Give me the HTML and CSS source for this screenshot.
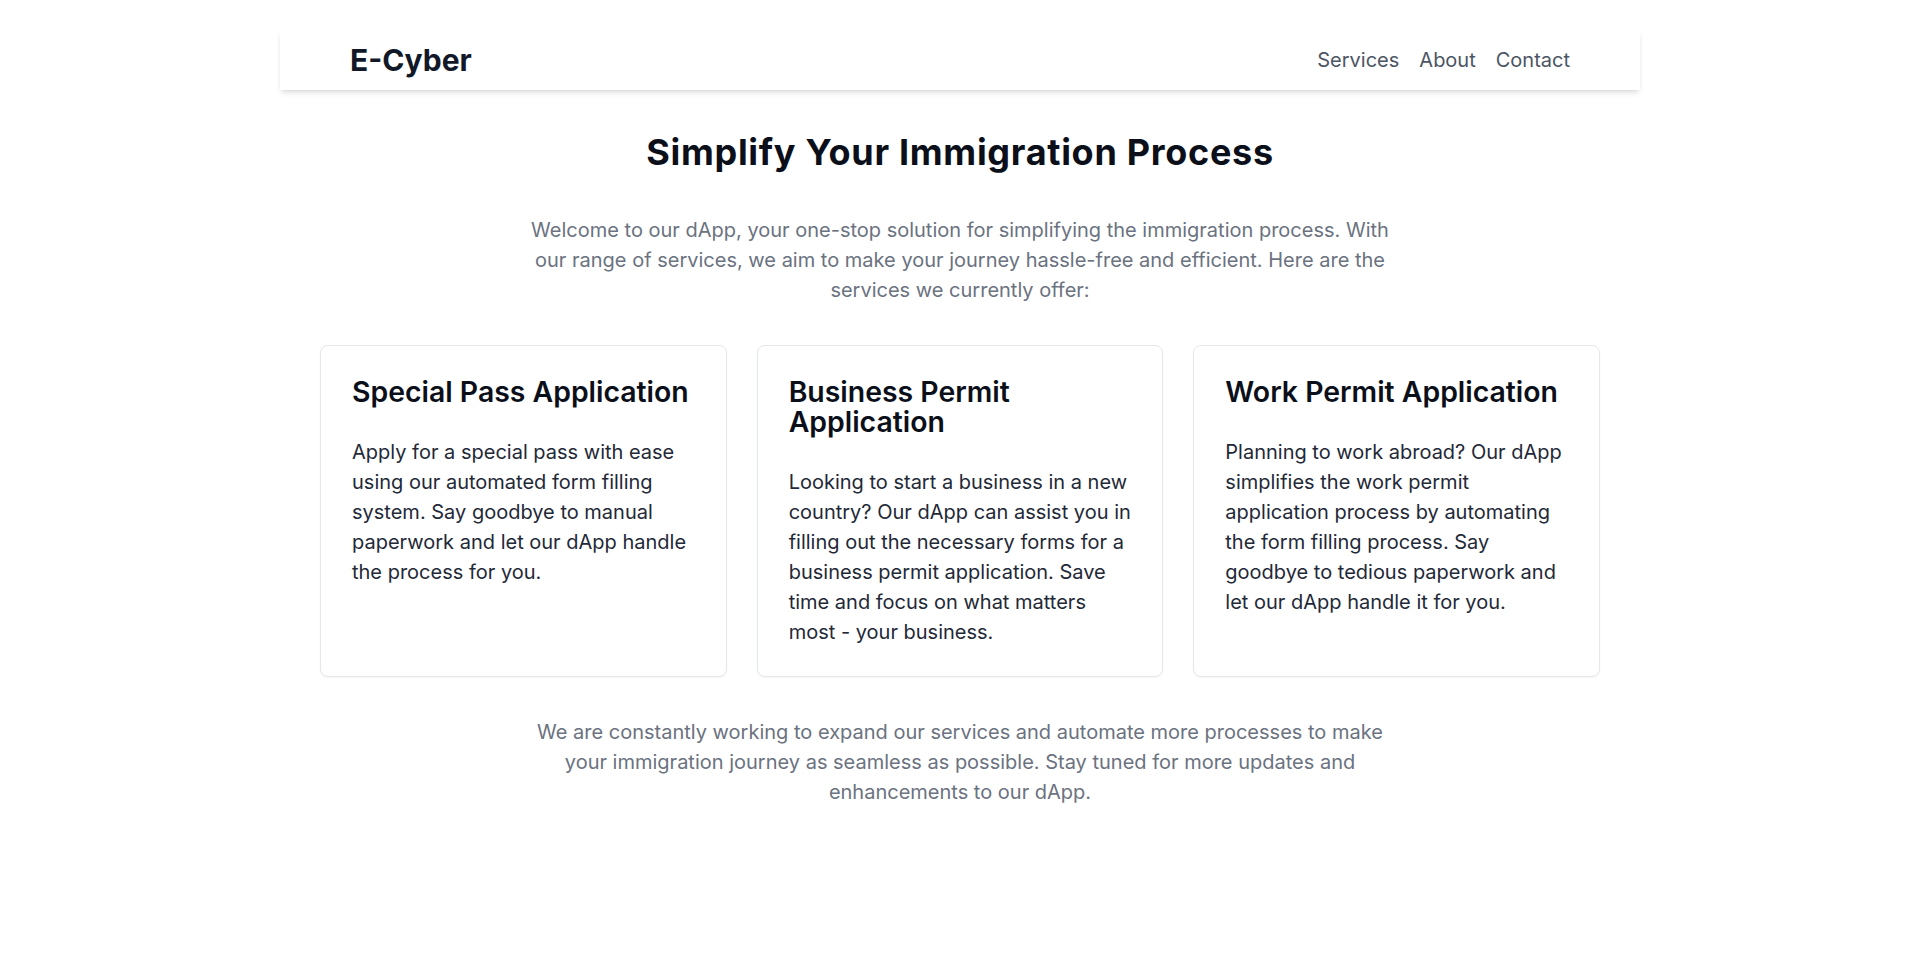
FILE: index.html
```html
<!DOCTYPE html>
<html lang="en">
<head>
<meta charset="utf-8">
<title>E-Cyber</title>
<link rel="stylesheet" href="styles.css">
</head>
<body>
<header class="site-header">
  <div class="brand">E-Cyber</div>
  <nav class="nav">
    <a href="#" class="nav-link">Services</a>
    <a href="#" class="nav-link">About</a>
    <a href="#" class="nav-link">Contact</a>
  </nav>
</header>
<main class="container">
  <h1 class="hero-title">Simplify Your Immigration Process</h1>
  <p class="lead">Welcome to our dApp, your one-stop solution for simplifying the immigration process. With our range of services, we aim to make your journey hassle-free and efficient. Here are the services we currently offer:</p>
  <section class="cards">
    <article class="card">
      <h2 class="card-title">Special Pass Application</h2>
      <p class="card-text">Apply for a special pass with ease using our automated form filling system. Say goodbye to manual paperwork and let our dApp handle the process for you.</p>
    </article>
    <article class="card">
      <h2 class="card-title">Business Permit Application</h2>
      <p class="card-text">Looking to start a business in a new country? Our dApp can assist you in filling out the necessary forms for a business permit application. Save time and focus on what matters most - your business.</p>
    </article>
    <article class="card">
      <h2 class="card-title">Work Permit Application</h2>
      <p class="card-text">Planning to work abroad? Our dApp simplifies the work permit application process by automating the form filling process. Say goodbye to tedious paperwork and let our dApp handle it for you.</p>
    </article>
  </section>
  <p class="lead closing">We are constantly working to expand our services and automate more processes to make your immigration journey as seamless as possible. Stay tuned for more updates and enhancements to our dApp.</p>
</main>
</body>
</html>
```
FILE: styles.css
```css
* { box-sizing: border-box; }
html, body { margin: 0; padding: 0; background: #ffffff; }
body {
  font-family: Inter, "Noto Sans", "Liberation Sans", sans-serif;
  color: #111827;
}
.site-header {
  width: 1360px;
  margin: 30px auto 0;
  padding: 12px 70px;
  display: flex;
  align-items: center;
  justify-content: space-between;
  background: #fff;
  box-shadow: 0 4px 6px -1px rgba(0,0,0,0.1), 0 2px 4px -2px rgba(0,0,0,0.1);
}
.brand {
  font-size: 30px;
  line-height: 36px;
  font-weight: 700;
  color: #111827;
}
.nav { display: flex; gap: 20px; }
.nav-link {
  font-size: 20px;
  line-height: 28px;
  color: #4b5563;
  text-decoration: none;
}
.container {
  width: 1280px;
  margin: 0 auto;
}
.hero-title {
  margin: 42px 0 0;
  text-align: center;
  font-size: 36px;
  line-height: 40px;
  font-weight: 700;
  letter-spacing: 0.7px;
  color: #0b0f1a;
}
.lead {
  max-width: 880px;
  margin: 43px auto 0;
  text-align: center;
  font-size: 20px;
  line-height: 30px;
  color: #6b7280;
}
.cards {
  display: grid;
  grid-template-columns: repeat(3, 1fr);
  gap: 30px;
  margin-top: 40px;
}
.card {
  border: 1px solid #e5e7eb;
  border-radius: 8px;
  padding: 31px 31px 29px;
  background: #fff;
  box-shadow: 0 1px 2px rgba(0,0,0,0.04);
}
.card-title {
  margin: 0;
  font-size: 28.4px;
  line-height: 30px;
  font-weight: 600;
  color: #0b0f1a;
}
.card-text {
  margin: 30px 0 0;
  font-size: 20px;
  line-height: 30px;
  color: #1f2937;
}
.closing { margin-top: 40px; }
```
